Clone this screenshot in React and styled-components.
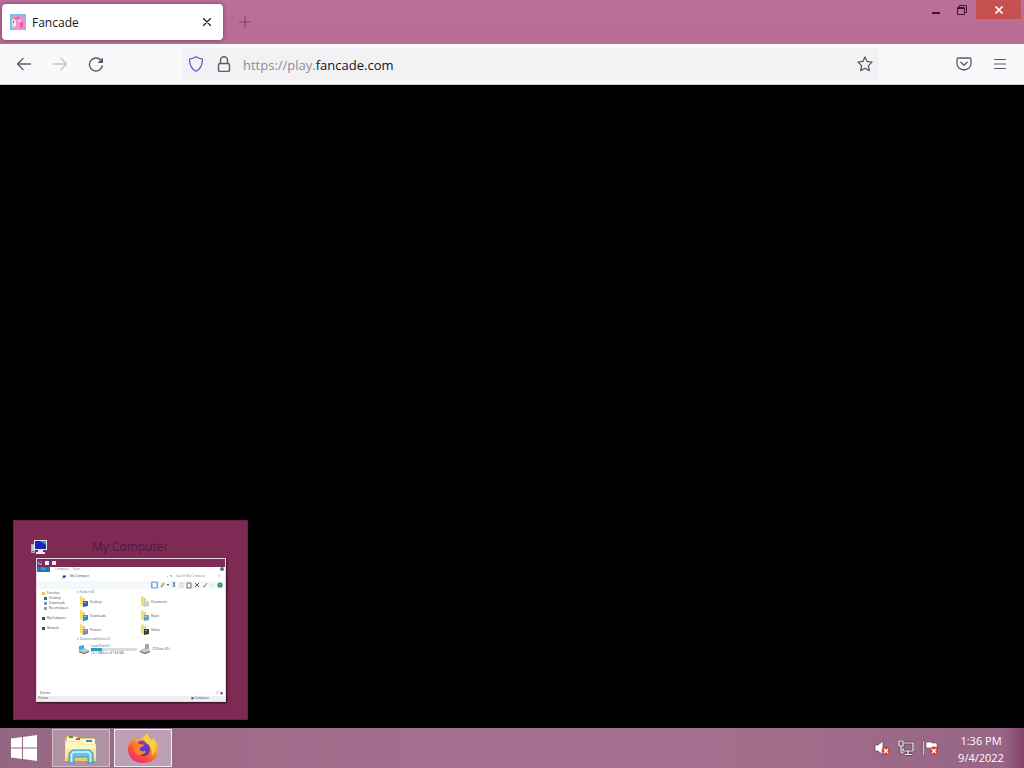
import React from "react";
import styled, { createGlobalStyle } from "styled-components";

const Global = createGlobalStyle`
  *, *::before, *::after { box-sizing: border-box; }
  body { margin: 0; background: #000; font-family: "Open Sans", "Noto Sans", sans-serif; }
  button { border: 0; padding: 0; margin: 0; background: none; font: inherit; color: inherit; display: flex; align-items: center; justify-content: center; }
  svg { display: block; flex: none; }
  h2, h3, p, ul { margin: 0; padding: 0; font: inherit; list-style: none; }
`;

const Desktop = styled.div`
  min-height: 100vh;
  display: flex;
  flex-direction: column;
`;

/* Browser window */
const TitleBar = styled.header`
  display: flex;
  align-items: flex-start;
  height: 44px;
  background: linear-gradient(#bb7099, #b96d95 75%, #b5708e);
`;
const Tab = styled.div`
  display: flex;
  align-items: center;
  width: 221px;
  height: 36px;
  margin: 4px 0 0 2px;
  padding: 0 8px;
  gap: 6px;
  background: #fff;
  border-radius: 4px;
  box-shadow: 0 0 4px rgba(70, 20, 60, 0.6);
  font-size: 12px;
  line-height: 16px;
  color: #15141a;
`;
const TabTitle = styled.span`
  flex: 1;
  padding-top: 2px;
`;
const TabClose = styled.button`
  width: 16px;
  height: 16px;
`;
const NewTab = styled.button`
  width: 20px;
  height: 36px;
  margin: 4px 0 0 12px;
`;
const WindowButtons = styled.div`
  display: flex;
  margin-left: auto;
`;
const WindowButton = styled.button`
  width: ${(p) => (p.$close ? 45 : 26)}px;
  height: 19px;
  background: ${(p) => (p.$close ? "#c75050" : "transparent")};
  margin: ${(p) => (p.$close ? "0 3px 0 1px" : "0")};
`;
const NavBar = styled.nav`
  display: flex;
  align-items: center;
  height: 41px;
  padding: 0 8px;
  background: #f9f9fb;
  border-bottom: 1px solid #cccccf;
`;
const NavButton = styled.button`
  width: 32px;
  height: 32px;
  margin-right: ${(p) => (p.$last ? 0 : 4)}px;
`;
const AddressBar = styled.div`
  display: flex;
  align-items: center;
  flex: 1;
  height: 32px;
  margin: 0 69px 0 70px;
  background: #f2f2f5;
  border-radius: 4px;
`;
const AddressButton = styled.button`
  width: 28px;
  height: 32px;
`;
const Address = styled.a`
  flex: 1;
  padding: 2px 0 0 5px;
  font-size: 13px;
  line-height: 18px;
  color: #8c8b92;
  text-decoration: none;
  b { font-weight: 400; color: #15141a; }
`;
const Page = styled.main`
  flex: 1;
  display: flex;
  align-items: flex-end;
  padding: 0 13px 8px;
  background: #000;
`;

/* Taskbar preview */
const Preview = styled.section`
  width: 235px;
  padding: 16px 22px 17px;
  background: #7f2a55;
  border: 1px solid #6b2248;
`;
const PreviewHead = styled.div`
  display: flex;
  align-items: center;
  height: 20px;
  margin: 0 0 1px -5px;
`;
const PreviewTitle = styled.h2`
  margin-left: 45px;
  font-size: 12px;
  line-height: 16px;
  color: #4b1c40;
`;
const Mini = styled.div`
  display: flex;
  flex-direction: column;
  width: 190px;
  height: 144px;
  background: #fff;
  border: 1px solid #e9d9e2;
  box-shadow: 1px 1px 2px #2d0b1d;
  font-size: 3px;
  line-height: 5px;
  color: #38404c;
  white-space: nowrap;
`;
const MiniTitle = styled.div`
  display: flex;
  align-items: center;
  height: 8px;
  padding-left: 1px;
  gap: 3px;
  background: #7f2a55;
`;
const MiniTabs = styled.div`
  display: flex;
  height: 5px;
  gap: 5px;
`;
const MiniTab = styled.span`
  width: ${(p) => (p.$file ? 13 : 13)}px;
  padding-left: ${(p) => (p.$file ? 4 : 0)}px;
  background: ${(p) => (p.$file ? "#1979c0" : "transparent")};
  color: ${(p) => (p.$file ? "#a8d2f0" : "#777")};
`;
const MiniHelp = styled.span`
  width: 4px;
  height: 4px;
  margin: 0 1px 0 auto;
  border-radius: 2px;
  background: #397f91;
`;
const MiniAddress = styled.div`
  display: flex;
  align-items: center;
  height: 9px;
  padding: 0 5px 0 20px;
  gap: 3px;
`;
const MiniSearch = styled.span`
  display: flex;
  justify-content: space-between;
  width: 44px;
  color: #888;
`;
const MiniPath = styled.span`
  flex: 1;
`;
const MiniTools = styled.div`
  display: flex;
  justify-content: flex-end;
  align-items: center;
  height: 8px;
  padding-right: 1px;
  background: linear-gradient(90deg, #f3f8fb, #f5f8fb);
`;
const MiniBody = styled.div`
  display: flex;
  flex: 1;
`;
const Side = styled.ul`
  width: 40px;
  padding: 2px 0 0 5px;
`;
const SideItem = styled.li`
  display: flex;
  align-items: center;
  gap: 2px;
  height: 5px;
  margin-top: ${(p) => (p.$group ? 5 : 0)}px;
  padding-left: ${(p) => (p.$child ? 2 : 0)}px;
`;
const Swatch = styled.i`
  width: ${(p) => (p.$tall ? 4 : 3)}px;
  height: ${(p) => (p.$tall ? 4 : 3)}px;
  background: ${(p) => p.$color};
`;
const Files = styled.div`
  flex: 1;
  padding-top: 1px;
`;
const GroupTitle = styled.h3`
  color: #46618a;
`;
const Grid = styled.div`
  display: grid;
  grid-template-columns: 61px 60px;
  grid-auto-rows: 14px;
  padding-left: 2px;
`;
const Item = styled.div`
  display: flex;
  align-items: center;
  gap: 2px;
`;
const Drive = styled.div`
  line-height: 4px;
`;
const Meter = styled.div`
  width: 46px;
  height: 3px;
  background: linear-gradient(90deg, #2a9ac4 25%, #d9dde0 25%);
`;
const MiniStatus = styled.div`
  display: flex;
  justify-content: space-between;
  height: 5px;
  padding: 0 ${(p) => (p.$bar ? 16 : 2)}px 0 ${(p) => (p.$bar ? 1 : 3)}px;
  background: ${(p) => (p.$bar ? "#edeff3" : "#fff")};
`;

/* Taskbar */
const Taskbar = styled.footer`
  display: flex;
  align-items: center;
  height: 40px;
  background: linear-gradient(90deg, #956683, #9e6b89 20%, #a37090 50%, #a16e8c 75%, #976585 98%, #85426b);
`;
const Start = styled.button`
  width: 48px;
  height: 40px;
`;
const TaskButton = styled.button`
  width: 58px;
  height: 38px;
  margin-left: 4px;
  background: ${(p) => (p.$active ? "#bba1b3" : "#b093a2")};
  border: 1px solid ${(p) => (p.$active ? "#f3ebf0" : "#d3bac8")};
`;
const Tray = styled.div`
  display: flex;
  align-items: center;
  gap: 8px;
  margin-left: auto;
`;
const Clock = styled.time`
  width: 86px;
  margin-left: -8px;
  padding-top: 2px;
  font-size: 11px;
  line-height: 17px;
  text-align: center;
  color: #fff;
`;

const Line = ({ size = 16, box = 16, color = "#5b5b66", w = 1.3, children }) => (
  <svg width={size} height={size} viewBox={`0 0 ${box} ${box}`} fill="none" stroke={color} strokeWidth={w} strokeLinecap="round" strokeLinejoin="round" aria-hidden="true">
    {children}
  </svg>
);

const Favicon = () => (
  <svg width="16" height="16" viewBox="0 0 16 16" aria-hidden="true">
    <path fill="#72c3e4" d="M0 0h16v16H0z" />
    <path fill="#f48fc8" d="M2 3l5-2 6 1 2 5v7l-4 2H6l-4-3z" />
    <path fill="#fbd0ea" d="M2 5l4 1v6l-3 2-1-3z" />
    <path fill="#e657a5" d="M7 2l3 2-2 2zM10 7l3 1v5l-3 1z" />
    <path fill="#5668b3" d="M5 4h2v1H5zM3 7h1v2H3z" />
    <path fill="#fff" d="M4 8h2v3H4z" />
    <path fill="#fbb6dd" d="M8 6l3-1v3L8 9z" />
  </svg>
);

const Monitor = ({ size = 16 }) => (
  <svg width={size} height={size} viewBox="0 0 16 16" aria-hidden="true">
    <path fill="#c9cad4" stroke="#625a70" strokeWidth=".5" d="M0 5h4v9H0z" />
    <path fill="#e8e8ee" d="M3 1h13v10H3zM7 11h5v2h2v2H5v-2h2z" />
    <path fill="#1527b4" d="M4 2h11v8H4z" />
    <path fill="#4b83ee" d="M9 2h6v4z" />
    <path fill="#3c9a55" d="M1 12h2v1H1z" />
  </svg>
);

const Folder = ({ color }) => (
  <svg width="9" height="12" viewBox="0 0 9 12" aria-hidden="true">
    <path fill="#f1df76" d="M1 0l3 1v10L1 9z" />
    <path fill="#e3d28a" d="M4 2h2v7l-2 2z" />
    <path fill={color} d="M4 5h5v5l-5 1z" />
    <path fill="#fff" fillOpacity=".5" d="M5 6h2v1H5z" />
  </svg>
);

const DriveIcon = ({ windows }) => (
  <svg width="10" height="12" viewBox="0 0 10 12" aria-hidden="true">
    <path fill="#c5c8cb" d="M0 7l5-2 5 2v2l-5 2-5-2z" />
    <path fill="#555d63" d="M0 8l5 2 5-2v1l-5 2-5-2z" />
    {windows ? <path fill="#29b2e6" d="M0 3l5-1v4L0 7z" /> : <path fill="#a5a9ad" d="M5 1h4v5H5z" />}
  </svg>
);

const Tools = () => (
  <svg width="76" height="8" viewBox="0 0 76 8" fill="none" strokeWidth="1" aria-hidden="true">
    <path fill="#a9ccf0" stroke="#7aa7de" d="M3.500 1h6v6h-6z" />
    <path fill="#fff" d="M5 2h3v4H5z" />
    <path stroke="#b8aa52" strokeWidth="2" d="M13 6l3-4" />
    <path fill="#333" d="M19 3h2l-1 2z" />
    <path stroke="#5186a8" d="M25 1l2 5M27 1l-2 5" />
    <path stroke="#c4d1dc" d="M32 2h3v4h-3z" />
    <path stroke="#7e7152" d="M39 2h4v5h-4z" />
    <path stroke="#555" d="M47 2l4 4M51 2l-4 4" />
    <path stroke="#a86758" d="M55 5l1 1 3-4" />
    <path stroke="#d4dadc" d="M62 6l4-3" />
    <circle cx="72" cy="4" r="2.600" fill="#348877" />
    <path stroke="#9bd3bd" d="M71 4h2" />
  </svg>
);

const Explorer = () => (
  <svg width="34" height="32" viewBox="0 0 34 32" aria-hidden="true">
    <path fill="#dcc467" d="M1 8l2-4h8l2 2h17l1 4v18H1z" />
    <path fill="#fff8dd" d="M3 5h10l3 2h15v5H3z" />
    <path fill="#39a251" d="M5 4h4v2H5z" />
    <path fill="#d94a37" d="M12 6h4v2h-4z" />
    <path fill="#3b86d6" d="M22 8h6v2h-6z" />
    <path fill="#f8e795" d="M1 9h16l3 3h12v17H1z" />
    <path fill="#fff6bd" d="M2 10h14l3 3h12v4H2z" />
    <path fill="#eacb66" d="M2 25h29v4H2z" />
    <path fill="#68c3e8" stroke="#3a91bd" strokeWidth=".8" d="M5 31V21l3-3h18l3 3v10h-5v-6H10v6z" />
    <path fill="none" stroke="#d6f4ff" strokeWidth="1.500" d="M7.500 30v-8l2-2h15l2 2v8" />
  </svg>
);

const Firefox = () => (
  <svg width="32" height="32" viewBox="0 0 32 32" aria-hidden="true">
    <defs>
      <linearGradient id="flame" x1="0.850" y1="0" x2="0.250" y2="1">
        <stop offset="0" stopColor="#fff04d" />
        <stop offset=".4" stopColor="#ffa52b" />
        <stop offset=".7" stopColor="#ff5036" />
        <stop offset="1" stopColor="#ee267e" />
      </linearGradient>
      <linearGradient id="globe" x1="0" y1="0" x2="0" y2="1">
        <stop offset="0" stopColor="#7f3fd6" />
        <stop offset="1" stopColor="#5138ad" />
      </linearGradient>
    </defs>
    <path fill="url(#flame)" d="M20 1c1 4 3 5 5 8l1-3c4 4 5 8 5 12 0 8-6 13-15 13S1 25 1 17c0-4 2-7 4-9l1-3 3 3h3c2-2 4-3 6-4 0 0 1-1 2-3z" />
    <path fill="url(#globe)" d="M12 9c6-2 11 2 11 8 0 5-3 7-7 7s-7-3-7-7c0-3 1-5 3-8z" />
    <path fill="#ff8027" d="M5 11c3-2 6-1 7 1 2 0 5 0 5 1-1 2-4 2-4 3-1 2 1 4 4 3 1 0 2 0 2 1-2 3-7 4-10 2-3-3-2-6-1-8-1-2-2-2-3-3z" />
    <path fill="#ffd03d" d="M20 1c1 4 3 5 5 8 4 5 4 10 0 15 1-7-2-11-6-13-3-3-2-6 1-10z" />
  </svg>
);

const Badge = () => (
  <g>
    <circle cx="12" cy="11" r="4.500" fill="#cf4543" />
    <path d="M10 9l4 4M14 9l-4 4" stroke="#fff" strokeWidth="1.400" />
  </g>
);

const folders = [
  ["Desktop", "#3c58c4"], ["Documents", "#c9cec4"],
  ["Downloads", "#2e91c9"], ["Music", "#6ba5bd"],
  ["Pictures", "#8a84bd"], ["Videos", "#3b3e3b"],
];

export default function App() {
  return (
    <Desktop>
      <Global />
      <TitleBar>
        <Tab>
          <Favicon />
          <TabTitle>Fancade</TabTitle>
          <TabClose aria-label="Close tab">
            <Line color="#15141a" w={1.1}><path d="M4.500 4.500l7 7M11.500 4.500l-7 7" /></Line>
          </TabClose>
        </Tab>
        <NewTab aria-label="New tab">
          <Line color="#83466f" w={1.2}><path d="M8 2.500v11M2.500 8h11" /></Line>
        </NewTab>
        <WindowButtons>
          <WindowButton aria-label="Minimize">
            <svg width="10" height="10" viewBox="0 0 10 10"><path fill="#44112f" d="M1 7h8v2H1z" /></svg>
          </WindowButton>
          <WindowButton aria-label="Restore">
            <svg width="10" height="10" viewBox="0 0 10 10" fill="none" stroke="#44112f"><path d="M.5 2.500h7v7h-7zM.5 3.500h7M2.500 2V.5h7v7H8" /></svg>
          </WindowButton>
          <WindowButton $close aria-label="Close">
            <svg width="8" height="8" viewBox="0 0 8 8" stroke="#fff" strokeWidth="1.600"><path d="M.5.5l7 7M7.500.5l-7 7" /></svg>
          </WindowButton>
        </WindowButtons>
      </TitleBar>
      <NavBar>
        <NavButton aria-label="Back"><Line><path d="M14.500 8h-13M7 2.500L1.500 8 7 13.500" /></Line></NavButton>
        <NavButton aria-label="Forward"><Line color="#c3c3c8"><path d="M1.500 8h13M9 2.500L14.500 8 9 13.500" /></Line></NavButton>
        <NavButton $last aria-label="Reload">
          <Line w={1.4}><path d="M14.300 10A6.500 6.500 0 1 1 12.800 4.200L13.500 5" /><path d="M15 1.500v5.500H9.500z" fill="#5b5b66" stroke="none" /></Line>
        </NavButton>
        <AddressBar>
          <AddressButton aria-label="Tracking protection">
            <Line color="#5a55c4" w={1.2}><path d="M8 .8c2 1.500 4 2 6.500 2.200 0 6-1.500 10-6.500 12.300C3 13 1.500 9 1.500 3 4 2.800 6 2.300 8 .8z" /></Line>
          </AddressButton>
          <AddressButton aria-label="Site security">
            <Line w={1.4}><rect x="2.500" y="7.500" width="11" height="8" rx="1.500" /><path d="M4.500 7.500V4.300a3.500 3.500 0 0 1 7 0v3.200" /></Line>
          </AddressButton>
          <Address href="https://play.fancade.com">https://play.<b>fancade.com</b></Address>
          <AddressButton aria-label="Bookmark this page">
            <Line><path d="M8 .9l2.100 4.500 4.900.7-3.600 3.500.9 5-4.300-2.400-4.300 2.400.9-5L1 6.100l4.900-.7z" /></Line>
          </AddressButton>
        </AddressBar>
        <NavButton aria-label="Save to Pocket">
          <Line><path d="M2.500 2h11a1.500 1.500 0 0 1 1.500 1.500V7.500a7 6.500 0 0 1-14 0V3.500A1.500 1.500 0 0 1 2.500 2zM4.800 6.200L8 9.300l3.200-3.100" /></Line>
        </NavButton>
        <NavButton $last aria-label="Open menu"><Line w={1.2}><path d="M2.500 3.500h11M2.500 8h11M2.500 12.500h11" /></Line></NavButton>
      </NavBar>
      <Page>
        <Preview>
          <PreviewHead>
            <Monitor />
            <PreviewTitle>My Computer</PreviewTitle>
          </PreviewHead>
          <Mini>
            <MiniTitle><Monitor size={4} /><Swatch $tall $color="#eee" /><Swatch $tall $color="#f3e7ee" /></MiniTitle>
            <MiniTabs><MiniTab $file>File</MiniTab><MiniTab>Computer</MiniTab><MiniTab>View</MiniTab><MiniHelp /></MiniTabs>
            <MiniAddress>
              <span>↑</span><Monitor size={4} />
              <MiniPath>› My Computer</MiniPath>
              <span>⌄ ↻</span>
              <MiniSearch><span>Search My Computer</span><span>⚲</span></MiniSearch>
            </MiniAddress>
            <MiniTools><Tools /></MiniTools>
            <MiniBody>
              <Side>
                <SideItem><Swatch $color="#e5c465" />Favorites</SideItem>
                <SideItem $child><Swatch $color="#2d6c88" />Desktop</SideItem>
                <SideItem $child><Swatch $color="#7b9ba3" />Downloads</SideItem>
                <SideItem $child><Swatch $color="#8da29b" />Recent places</SideItem>
                <SideItem $group><Swatch $color="#344c7c" />My Computer</SideItem>
                <SideItem $group><Swatch $color="#2b587b" />Network</SideItem>
              </Side>
              <Files>
                <GroupTitle>▾ Folders (6)</GroupTitle>
                <Grid>
                  {folders.map(([name, color]) => (
                    <Item key={name}><Folder color={color} />{name}</Item>
                  ))}
                </Grid>
                <GroupTitle>▾ Devices and drives (2)</GroupTitle>
                <Grid>
                  <Item>
                    <DriveIcon windows />
                    <Drive><p>Local Disk (C:)</p><Meter /><p>15.1 GB free of 19.6 GB</p></Drive>
                  </Item>
                  <Item><DriveIcon />CD Drive (D:)</Item>
                </Grid>
              </Files>
            </MiniBody>
            <MiniStatus><span>8 items</span><span>☷ ▣</span></MiniStatus>
            <MiniStatus $bar><span>8 items</span><span>▣ Computer</span></MiniStatus>
          </Mini>
        </Preview>
      </Page>
      <Taskbar>
        <Start aria-label="Start">
          <svg width="28" height="26" viewBox="0 0 28 26" fill="#fff"><path d="M1 3.500l11-1.500v10.500H1zM13 2l14-2v12.500H13zM1 13.500h11V24L1 22.500zM13 13.500h14V26l-14-2z" /></svg>
        </Start>
        <TaskButton aria-label="File Explorer"><Explorer /></TaskButton>
        <TaskButton $active aria-label="Firefox"><Firefox /></TaskButton>
        <Tray>
          <svg width="16" height="16" viewBox="0 0 16 16" aria-label="Volume muted"><path fill="#fff" stroke="#4c2f43" strokeWidth=".6" d="M1 5h3l5-4v14l-5-4H1z" /><Badge /></svg>
          <svg width="16" height="16" viewBox="0 0 16 16" fill="none" aria-label="Network">
            <g stroke="#4c2f43" strokeWidth="2.600"><path d="M6 3h9v8H5V8M10 11v3M7 14.500h7M1 1h4v5H1zM3 6v7h3" /></g>
            <g stroke="#fff" strokeWidth="1.200"><path d="M6 3h9v8H5V8M10 11v3M7 14.500h7M1 1h4v5H1zM3 6v7h3" /></g>
          </svg>
          <svg width="16" height="16" viewBox="0 0 16 16" aria-label="Notifications"><path fill="#fff" stroke="#4c2f43" strokeWidth=".5" d="M1 1h1.500v14H1zM4 2h5l1 1h5v7H9L8 8H4z" /><Badge /></svg>
          <Clock><div>1:36 PM</div><div>9/4/2022</div></Clock>
        </Tray>
      </Taskbar>
    </Desktop>
  );
}
